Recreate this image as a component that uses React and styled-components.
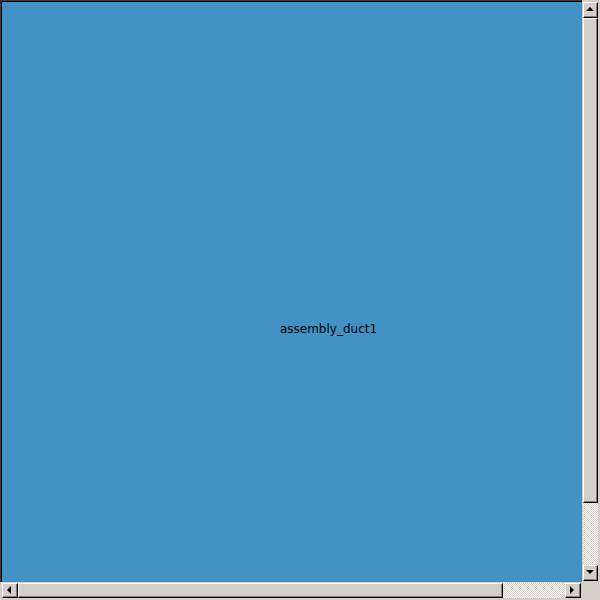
import React from "react";
import styled, { createGlobalStyle } from "styled-components";

const GRAY = "#d4d0c8";

const Global = createGlobalStyle`
  html, body { margin: 0; padding: 0; background: ${GRAY}; }
  body { width: 600px; height: 600px; overflow: hidden; }
`;

const Frame = styled.div`
  width: 600px;
  height: 600px;
  display: grid;
  grid-template-columns: 582px 18px;
  grid-template-rows: 582px 18px;
  background: ${GRAY};
  font-family: "DejaVu Sans", sans-serif;
`;

const Canvas = styled.div`
  box-sizing: border-box;
  background: #4292c6;
  border-top: 1px solid #3a3a3a;
  border-left: 1px solid #3a3a3a;
  box-shadow: inset 1px 1px 0 #000;
  display: flex;
  align-items: center;
  justify-content: center;
  padding: 74px 0 0 74px;
`;

const Label = styled.span`
  font-size: 12px;
  color: #000;
`;

const stipple = `
  background-color: #ffffff;
  background-image: repeating-conic-gradient(${GRAY} 0 25%, #ffffff 0 50%);
  background-size: 2px 2px;
`;

const VBar = styled.div`
  box-sizing: border-box;
  padding: 2px 2px 1px 1px;
  display: flex;
  flex-direction: column;
  background: ${GRAY};
`;

const HBar = styled.div`
  box-sizing: border-box;
  padding: 1px 1px 2px 2px;
  display: flex;
  flex-direction: row;
  background: ${GRAY};
  border-left: 2px solid #000;
  margin-left: -2px;
`;

const Trough = styled.div`
  flex: 1;
  display: flex;
  flex-direction: ${(p) => (p.$vertical ? "column" : "row")};
  ${stipple}
`;

const Raised = styled.div`
  box-sizing: border-box;
  background: ${GRAY};
  border-top: 1px solid #ffffff;
  border-left: 1px solid #ffffff;
  border-right: 1px solid #000;
  border-bottom: 1px solid #000;
  box-shadow: inset -1px -1px 0 #808080;
`;

const ArrowButton = styled(Raised)`
  flex: 0 0 auto;
  width: ${(p) => (p.$vertical ? "15px" : "16px")};
  height: ${(p) => (p.$vertical ? "16px" : "15px")};
  display: flex;
  align-items: center;
  justify-content: center;
  padding: 0 1px 1px 0;
`;

const Thumb = styled(Raised)`
  flex: 0 0 auto;
  width: ${(p) => (p.$vertical ? "15px" : `${p.$size}px`)};
  height: ${(p) => (p.$vertical ? `${p.$size}px` : "15px")};
`;

const Corner = styled.div`
  background: ${GRAY};
`;

const Arrow = ({ dir }) => {
  const pts = {
    up: "0,4 8,4 4,0",
    down: "0,0 8,0 4,4",
    left: "4,0 4,8 0,4",
    right: "0,0 0,8 4,4",
  }[dir];
  const vertical = dir === "up" || dir === "down";
  return (
    <svg width={vertical ? 8 : 5} height={vertical ? 5 : 8} viewBox={vertical ? "0 0 8 5" : "0 0 5 8"}>
      <polygon points={pts} fill="#000" />
    </svg>
  );
};

export default function App() {
  return (
    <>
      <Global />
      <Frame>
        <Canvas>
          <Label>assembly_duct1</Label>
        </Canvas>
        <VBar>
          <ArrowButton $vertical>
            <Arrow dir="up" />
          </ArrowButton>
          <Trough $vertical>
            <Thumb $vertical $size={485} />
          </Trough>
          <ArrowButton $vertical>
            <Arrow dir="down" />
          </ArrowButton>
        </VBar>
        <HBar>
          <ArrowButton>
            <Arrow dir="left" />
          </ArrowButton>
          <Trough>
            <Thumb $size={485} />
          </Trough>
          <ArrowButton>
            <Arrow dir="right" />
          </ArrowButton>
        </HBar>
        <Corner />
      </Frame>
    </>
  );
}
